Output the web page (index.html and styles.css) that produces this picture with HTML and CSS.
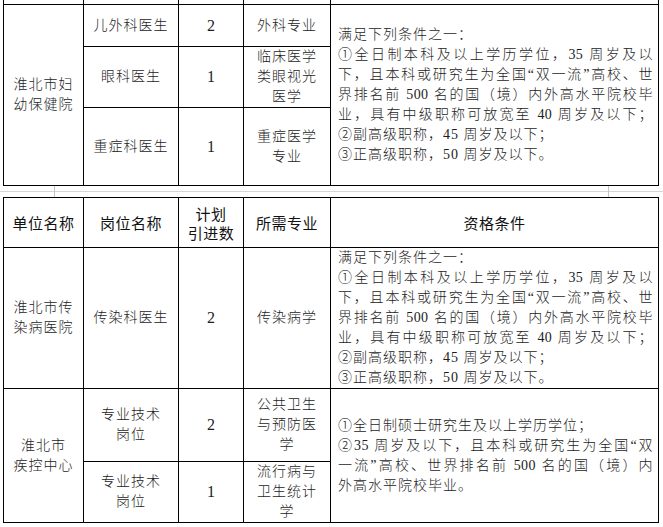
FILE: index.html
```html
<!DOCTYPE html>
<html lang="zh-CN">
<head>
<meta charset="utf-8">
<title>招聘岗位表</title>
<link rel="stylesheet" href="styles.css">
</head>
<body>
<div class="page">
  <table class="tbl">
    <colgroup><col class="w1"><col class="w2"><col class="w3"><col class="w4"><col class="w5"></colgroup>
    <tr class="h-cut"><td></td><td></td><td></td><td></td><td></td></tr>
    <tr class="h42">
      <td rowspan="3">淮北市妇<br>幼保健院</td>
      <td>儿外科医生</td>
      <td class="num">2</td>
      <td>外科专业</td>
      <td rowspan="3" class="q">
        <span class="ln">满足下列条件之一：</span>
        <span class="ln j">①全日制本科及以上学历学位，35 周岁及以</span>
        <span class="ln j">下，且本科或研究生为全国“双一流”高校、世</span>
        <span class="ln j">界排名前 500 名的国（境）内外高水平院校毕</span>
        <span class="ln j">业，具有中级职称可放宽至 40 周岁及以下；</span>
        <span class="ln">②副高级职称，45 周岁及以下；</span>
        <span class="ln">③正高级职称，50 周岁及以下。</span>
      </td>
    </tr>
    <tr class="h61">
      <td>眼科医生</td>
      <td class="num">1</td>
      <td>临床医学<br>类眼视光<br>医学</td>
    </tr>
    <tr class="h78">
      <td>重症科医生</td>
      <td class="num">1</td>
      <td>重症医学<br>专业</td>
    </tr>
  </table>

  <div class="sep"><span></span><span class="tick"></span><span></span><span class="tick"></span><span></span></div>

  <table class="tbl">
    <colgroup><col class="w1"><col class="w2"><col class="w3"><col class="w4"><col class="w5"></colgroup>
    <tr class="h50 head">
      <th>单位名称</th>
      <th>岗位名称</th>
      <th>计划<br>引进数</th>
      <th>所需专业</th>
      <th>资格条件</th>
    </tr>
    <tr class="h140">
      <td>淮北市传<br>染病医院</td>
      <td>传染科医生</td>
      <td class="num">2</td>
      <td>传染病学</td>
      <td class="q top">
        <span class="ln">满足下列条件之一：</span>
        <span class="ln j">①全日制本科及以上学历学位，35 周岁及以</span>
        <span class="ln j">下，且本科或研究生为全国“双一流”高校、世</span>
        <span class="ln j">界排名前 500 名的国（境）内外高水平院校毕</span>
        <span class="ln j">业，具有中级职称可放宽至 40 周岁及以下；</span>
        <span class="ln">②副高级职称，45 周岁及以下；</span>
        <span class="ln">③正高级职称，50 周岁及以下。</span>
      </td>
    </tr>
    <tr class="h73">
      <td rowspan="2">淮北市<br>疾控中心</td>
      <td>专业技术<br>岗位</td>
      <td class="num">2</td>
      <td>公共卫生<br>与预防医<br>学</td>
      <td rowspan="2" class="q">
        <span class="ln">①全日制硕士研究生及以上学历学位；</span>
        <span class="ln j">②35 周岁及以下，且本科或研究生为全国“双</span>
        <span class="ln j">一流”高校、世界排名前 500 名的国（境）内</span>
        <span class="ln">外高水平院校毕业。</span>
      </td>
    </tr>
    <tr class="h61">
      <td>专业技术<br>岗位</td>
      <td class="num">1</td>
      <td>流行病与<br>卫生统计<br>学</td>
    </tr>
  </table>
</div>
</body>
</html>
```

FILE: styles.css
```css
html, body {
  margin: 0;
  padding: 0;
  background: #ffffff;
}

body {
  font-family: "Liberation Serif", "Noto Sans CJK SC", serif;
  color: #1c1c1c;
}

.page {
  padding-left: 3px;
}

.tbl {
  border-collapse: collapse;
  table-layout: fixed;
  width: 655px;
}

.w1 { width: 80px; }
.w2 { width: 95px; }
.w3 { width: 65px; }
.w4 { width: 87px; }
.w5 { width: 328px; }

.tbl td,
.tbl th {
  border: 1px solid #000;
  padding: 0 5px;
  font-size: 14px;
  line-height: 20px;
  letter-spacing: 1px;
  font-weight: 300;
  text-align: center;
  vertical-align: middle;
  overflow: hidden;
}

.tbl th {
  font-family: "Noto Sans CJK SC", sans-serif;
  font-size: 15px;
  font-weight: 400;
  letter-spacing: 0.5px;
  line-height: 19px;
  color: #111;
}

.h-cut td {
  border-top: none;
  height: 4px;
  padding: 0;
}

.h42 td { height: 41px; }
.h61 td { height: 60px; }
.h78 td { height: 77px; }
.h50 th { height: 49px; }
.h140 td { height: 139px; }
.h73 td { height: 72px; }

.tbl td.num {
  font-size: 16px;
  letter-spacing: 0;
}

.tbl td.q {
  text-align: left;
  padding: 0 5px 0 7px;
}

.tbl td.q.top {
  vertical-align: top;
}

.ln {
  display: block;
  white-space: nowrap;
}

.ln.j {
  letter-spacing: 0.4px;
  text-align: justify;
  text-align-last: justify;
}

.sep {
  margin-left: -3px;
  height: 11px;
  display: grid;
  grid-template-columns: 54px 1px 553px 1px 1fr;
  background: linear-gradient(to bottom, transparent 5px, #d6d6d6 5px, #d6d6d6 6px, transparent 6px);
}

.sep .tick {
  background: #c4c4c4;
}
```
